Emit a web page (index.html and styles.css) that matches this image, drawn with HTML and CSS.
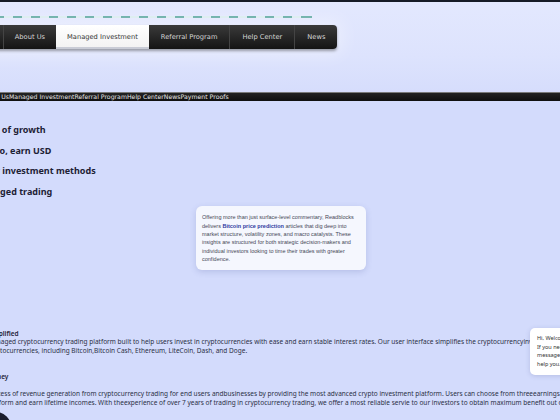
FILE: index.html
```html
<!DOCTYPE html>
<html lang="en">
<head>
    <meta charset="UTF-8">
    <meta name="viewport" content="width=device-width, initial-scale=1.0">
    <title>Managed Investment</title>
    <link rel="stylesheet" href="styles.css">
</head>
<body>
    <div class="topline"></div>

    <header class="header">
        <div class="dashes"></div>
        <ul class="menu">
            <li><a href="#">Home</a></li>
            <li><a href="#">About Us</a></li>
            <li class="active"><a href="#">Managed Investment</a></li>
            <li><a href="#">Referral Program</a></li>
            <li><a href="#">Help Center</a></li>
            <li><a href="#">News</a></li>
        </ul>
    </header>

    <div class="subnav">
        <div class="subnav-links">
            <a href="#">About Us</a><a href="#">Managed Investment</a><a href="#">Referral Program</a><a href="#">Help Center</a><a href="#">News</a><a href="#">Payment Proofs</a>
        </div>
    </div>

    <ul class="features">
        <li>Years of growth</li>
        <li>Crypto, earn USD</li>
        <li>Many investment methods</li>
        <li>Managed trading</li>
    </ul>

    <div class="note">
        Offering more than just surface-level commentary, Readblocks delivers <a href="#">Bitcoin price prediction</a> articles that dig deep into market structure, volatility zones, and macro catalysts. These insights are structured for both strategic decision-makers and individual investors looking to time their trades with greater confidence.
    </div>

    <div class="about">
        <h3>Simplified</h3>
        <p>managed cryptocurrency trading platform built to help users invest in cryptocurrencies with ease and earn stable interest rates. Our user interface simplifies the cryptocurrencyinvestment process and supports<br>cryptocurrencies, including Bitcoin,Bitcoin Cash, Ethereum, LiteCoin, Dash, and Doge.</p>

        <h3 class="second">Money</h3>
        <p>process of revenue generation from cryptocurrency trading for end users andbusinesses by providing the most advanced crypto investment platform. Users can choose from threeearnings plans on our<br>platform and earn lifetime incomes. With theexperience of over 7 years of trading in cryptocurrency trading, we offer a most reliable servie to our investors to obtain maximum benefit out of their investment.</p>
    </div>

    <div class="chat">
        Hi, Welcome to our site.<br>
        If you need help, send us a<br>
        message and we will<br>
        help you.
    </div>

    <div class="chat-button"></div>
</body>
</html>
```

FILE: styles.css
```css
body {
    margin: 0;
    width: 560px;
    height: 420px;
    overflow: hidden;
    position: relative;
    background-color: #d3dbfc;
    font-family: "Noto Sans", sans-serif;
}

ul {
    list-style-type: none;
    margin: 0;
    padding: 0;
}

a {
    text-decoration: none;
}

.topline {
    height: 2px;
    background-color: #161b27;
}

/* barra superior com o menu escuro */
.header {
    height: 76px;
    padding-top: 14px;
    background: linear-gradient(#e3e8fe, #dde3fd 60%, #d6ddfc);
}

.dashes {
    width: 312px;
    height: 2px;
    background: repeating-linear-gradient(90deg, #5ea8a2 0 9px, #d9ecef 9px 18px);
    background-position: -5px 0;
    margin-bottom: 7px;
}

.menu {
    display: flex;
    width: fit-content;
    margin-left: -39px;
    background: linear-gradient(#3a3a3a, #141414);
    border-radius: 0 4px 4px 0;
    box-shadow: 0 2px 3px rgba(0, 0, 0, 0.35), 0 0 18px 6px rgba(255, 255, 255, 0.35);
}

.menu li {
    border-left: 1px solid #444;
}

.menu li:first-child {
    border-left: none;
}

.menu a {
    display: block;
    padding: 0 11px;
    line-height: 24px;
    font-family: "DejaVu Sans", sans-serif;
    font-size: 6.7px;
    color: #d6d6d6;
}

.menu li:nth-child(n+4) a {
    padding: 0 12px;
}

.menu .active {
    border-left: none;
}

.menu .active a {
    background: linear-gradient(#ffffff, #f2f2f2);
    color: #333;
    box-shadow: inset 0 -2px 0 #c9ccd6;
}

.menu .active + li {
    border-left: none;
}

.subnav {
    height: 9px;
    background: linear-gradient(#7a7a7a 0 1px, #222 1px, #0f0f0f);
}

.subnav-links {
    margin-left: -19px;
    white-space: nowrap;
    font-size: 6.2px;
    line-height: 9px;
}

.subnav-links a {
    font-family: "DejaVu Sans", sans-serif;
    color: #e6e6e6;
}

/* lista de destaques */
.features {
    margin: 19px 0 0 -25px;
}

.features li {
    font-size: 9px;
    font-weight: 700;
    line-height: 20.6px;
    color: #1d2135;
}

.note {
    width: 158px;
    margin: 4px 0 0 196px;
    padding: 7px 6px;
    background-color: #f5f7fe;
    border-radius: 6px;
    box-shadow: 0 2px 6px rgba(70, 80, 150, 0.2);
    font-family: "Liberation Sans", Arial, sans-serif;
    font-size: 5.5px;
    line-height: 8.3px;
    color: #454857;
}

.note a {
    color: #2d3a9e;
    font-weight: 700;
}

.about {
    margin: 59px 0 0 -13px;
}

.about h3 {
    margin: 0;
    font-size: 6.5px;
    font-weight: 600;
    line-height: 9px;
    color: #1d2135;
}

.about .second {
    margin-top: 17px;
}

.about p {
    width: 1000px;
    margin: 0;
    font-size: 6.5px;
    line-height: 8.6px;
    color: #2b3045;
}

.about .second + p {
    margin-top: 9px;
}

.chat {
    position: absolute;
    left: 530px;
    top: 328px;
    width: 80px;
    padding: 6px 7px;
    background-color: #fff;
    border-radius: 5px;
    box-shadow: 0 1px 5px rgba(60, 70, 130, 0.2);
    font-size: 5.5px;
    line-height: 8.7px;
    color: #333;
    white-space: nowrap;
}

.chat-button {
    position: absolute;
    left: -19px;
    top: 412px;
    width: 30px;
    height: 30px;
    border-radius: 50%;
    background-color: #1a1d2e;
}
```
